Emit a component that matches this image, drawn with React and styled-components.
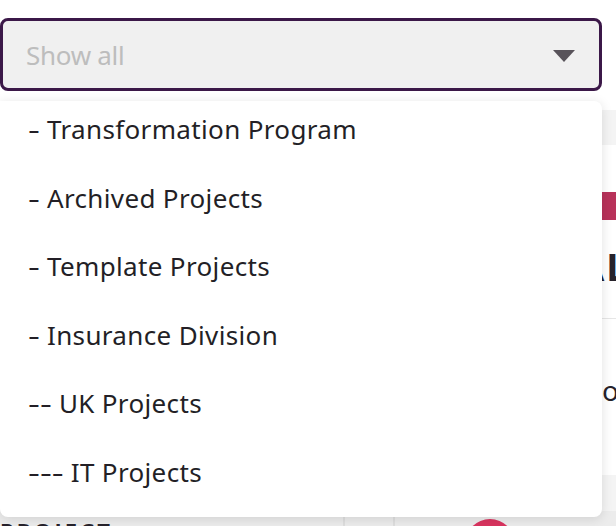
import React from 'react';
import styled, { createGlobalStyle } from 'styled-components';

const GlobalStyle = createGlobalStyle`
  html, body {
    margin: 0;
    padding: 0;
    background: #f4f4f4;
    font-family: "Noto Sans", "DejaVu Sans", sans-serif;
    overflow: hidden;
  }
`;

const options = [
  { depth: 1, label: 'Transformation Program' },
  { depth: 1, label: 'Archived Projects' },
  { depth: 1, label: 'Template Projects' },
  { depth: 1, label: 'Insurance Division' },
  { depth: 2, label: 'UK Projects' },
  { depth: 3, label: 'IT Projects' },
];

const Page = styled.div`
  position: relative;
  width: 616px;
  height: 526px;
  overflow: hidden;
`;

const FilterBar = styled.div`
  padding-top: 18px;
  height: 110px;
  box-sizing: border-box;
  background: #fff;
`;

const Select = styled.div`
  width: 602px;
  height: 73px;
  box-sizing: border-box;
  border: 3px solid #3b1848;
  border-radius: 8px;
  background: #f0f0f0;
  display: flex;
  align-items: center;
  justify-content: space-between;
  padding: 0 24px 0 23px;
`;

const Placeholder = styled.span`
  font-size: 26px;
  color: #bdbdbd;
  letter-spacing: -0.3px;
`;

const Caret = styled.span`
  width: 0;
  height: 0;
  border-left: 11px solid transparent;
  border-right: 11px solid transparent;
  border-top: 12px solid #58535a;
  margin-top: 2px;
`;

const Content = styled.div`
  display: flex;
  flex-direction: column;
  gap: 36px;
  padding-top: 35px;
`;

const Card = styled.div`
  margin-left: 180px;
  background: #fff;
  height: 330px;
  padding: 47px 0 0 0;
  box-sizing: border-box;
  display: flex;
  flex-direction: column;
`;

const Badge = styled.span`
  align-self: flex-start;
  margin-left: 400px;
  background: #b8325a;
  border-radius: 6px;
  width: 60px;
  height: 28px;
`;

const CardTitle = styled.div`
  margin: 20px 0 0 398px;
  font-size: 38px;
  font-weight: 700;
  color: #26222b;
  letter-spacing: 2px;
  white-space: nowrap;
`;

const Divider = styled.div`
  height: 1px;
  background: #e6e6e6;
  margin-top: 26px;
`;

const CardText = styled.div`
  margin: 52px 0 0 422px;
  font-size: 28px;
  color: #26222b;
`;

const TableHead = styled.div`
  display: grid;
  grid-template-columns: 345px 50px 1fr;
  background: #ececec;
  height: 60px;
`;

const HeadCell = styled.div`
  border-right: 2px solid #dedede;
  padding: 4px 0 0 0;
  font-size: 22px;
  font-weight: 700;
  letter-spacing: 3px;
  color: #26222b;
  &:last-child { border-right: none; }
`;

const Dot = styled.span`
  display: block;
  width: 50px;
  height: 50px;
  border-radius: 50%;
  background: #d9345f;
  margin: 4px 0 0 70px;
`;

const Menu = styled.ul`
  position: absolute;
  top: 101px;
  left: 0;
  width: 602px;
  margin: 0;
  padding: 0 0 4px 0;
  list-style: none;
  background: #fff;
  border-radius: 0 8px 8px 8px;
  box-shadow: 0 2px 12px rgba(0, 0, 0, 0.12);
`;

const MenuItem = styled.li`
  padding: 16px 28px 28.6px;
  line-height: 24px;
  font-size: 26px;
  color: #231f26;
  letter-spacing: 0.35px;
  white-space: nowrap;
`;

const Dashes = styled.span`
  display: inline-block;
  letter-spacing: 0;
  transform: scaleX(1.42);
  transform-origin: left center;
  margin-right: ${(p) => p.$depth * 3.5}px;
`;

export default function App() {
  return (
    <Page>
      <GlobalStyle />
      <FilterBar>
        <Select>
          <Placeholder>Show all</Placeholder>
          <Caret />
        </Select>
      </FilterBar>
      <Content>
        <Card>
          <Badge />
          <CardTitle>AL</CardTitle>
          <Divider />
          <CardText>o</CardText>
        </Card>
        <TableHead>
          <HeadCell>PROJECT</HeadCell>
          <HeadCell />
          <HeadCell><Dot /></HeadCell>
        </TableHead>
      </Content>
      <Menu>
        {options.map((o) => (
          <MenuItem key={o.label}>
            <Dashes $depth={o.depth}>{'-'.repeat(o.depth)}</Dashes> {o.label}
          </MenuItem>
        ))}
      </Menu>
    </Page>
  );
}
